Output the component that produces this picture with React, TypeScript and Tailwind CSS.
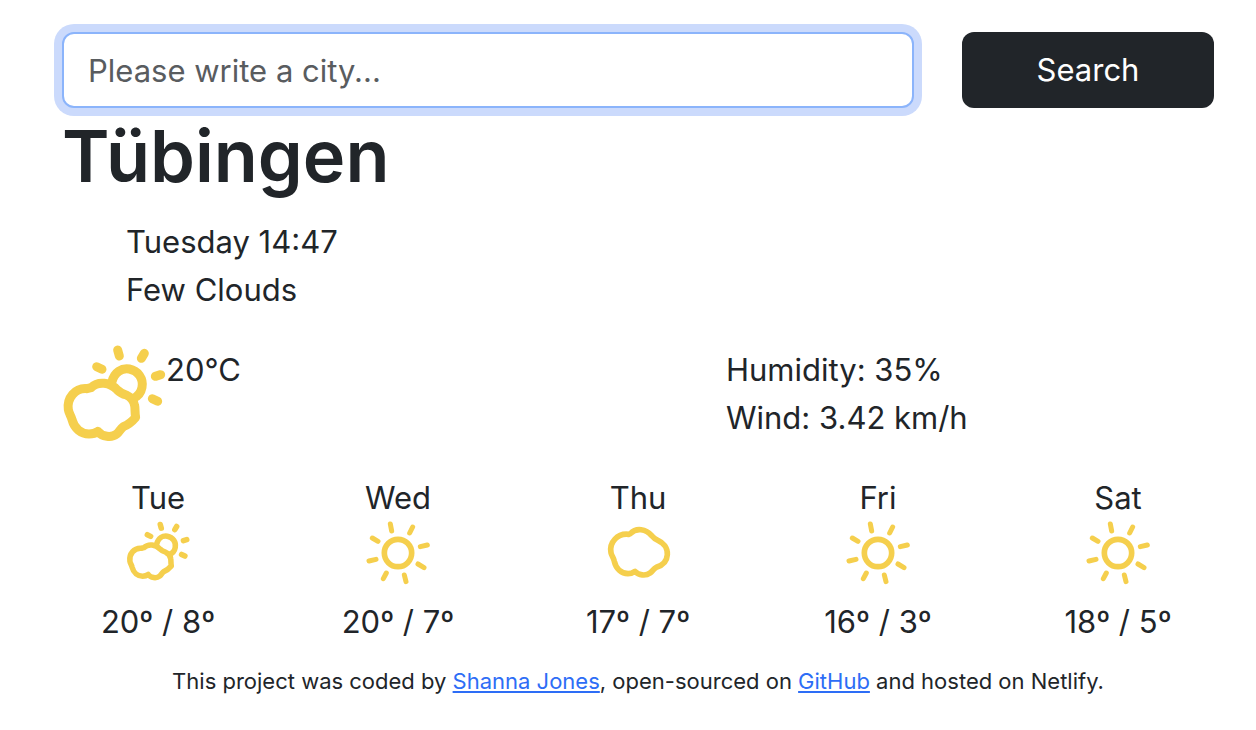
import React from "react";

type IconName = "partly" | "sun" | "cloud";

function WeatherIcon({ name, className }: { name: IconName; className: string }) {
  const common = {
    className: `overflow-visible ${className}`,
    fill: "none",
    stroke: "#f5cf4d",
    strokeLinecap: "round" as const,
    strokeLinejoin: "round" as const,
    role: "img",
  };
  if (name === "partly") {
    return (
      <svg {...common} viewBox="36 33 312 312" strokeWidth="27" aria-label="Partly cloudy">
        <path d="M111 161C75 158 50 190 55 224C57 237 64 243 66 254C73 281 94 297 117 297C128 297 136 295 144 289C156 306 185 309 200 297C209 290 211 281 220 275C235 269 246 260 257 247C254 235 256 222 254 212C251 194 240 185 229 180C217 177 210 173 202 165C180 142 145 137 123 158Z" />
        <path d="M186 140C193 111 216 98 238 102C264 107 281 131 276 157C273 174 263 185 248 191" />
        <path d="M203 45L208 63M283 55L274 70M140 95L156 103M316 124L332 119M307 191L323 199" />
      </svg>
    );
  }
  if (name === "sun") {
    return (
      <svg {...common} viewBox="48 36 192 192" strokeWidth="17" aria-label="Sunny">
        <circle cx="144" cy="129" r="41" />
        <path
          strokeWidth="15"
          d="M121 42L125 63M188 51L179 69M67 84L84 94M211 110L232 105M57 153L78 148M204 162L222 173M109 189L100 206M163 195L168 215"
        />
      </svg>
    );
  }
  return (
    <svg {...common} viewBox="48 36 192 192" strokeWidth="17" aria-label="Cloudy">
      <path d="M116 73C83 69 57 97 63 128C65 138 71 143 73 154C78 177 95 190 114 191C122 191 129 188 135 184C146 196 167 199 180 189C188 184 190 176 199 172C219 166 231 152 232 134C233 112 219 98 205 92C194 88 190 83 185 77C168 57 139 52 121 71Z" />
    </svg>
  );
}

const forecast: { day: string; icon: IconName; high: number; low: number }[] = [
  { day: "Tue", icon: "partly", high: 20, low: 8 },
  { day: "Wed", icon: "sun", high: 20, low: 7 },
  { day: "Thu", icon: "cloud", high: 17, low: 7 },
  { day: "Fri", icon: "sun", high: 16, low: 3 },
  { day: "Sat", icon: "sun", high: 18, low: 5 },
];

export default function App() {
  return (
    <main className="bg-white pt-8 pr-[18px] pb-8 pl-[38px] font-['Inter',sans-serif] text-[31px] leading-[48px] text-[#212529]">
      <form className="grid grid-cols-12" onSubmit={(e) => e.preventDefault()}>
        <div className="col-span-9 px-6">
          <input
            type="search"
            aria-label="City"
            placeholder="Please write a city..."
            className="block h-[76px] w-full appearance-none rounded-xl border-2 border-[#8bb4fb] bg-white px-6 shadow-[0_0_0_8px_#cbdafc] outline-none placeholder:text-[#595c5f]"
          />
        </div>
        <div className="col-span-3 px-6">
          <button type="submit" className="block h-[76px] w-full rounded-xl bg-[#212529] text-white">
            Search
          </button>
        </div>
      </form>

      <h1 className="px-6 pb-3.5 text-[72px] leading-[96px] font-semibold">Tübingen</h1>
      <ul className="mb-8 pr-6 pl-[88px]">
        <li>Tuesday 14:47</li>
        <li>Few Clouds</li>
      </ul>

      <div className="mb-8 grid grid-cols-2">
        <div className="flex px-6">
          <WeatherIcon name="partly" className="-mb-2 size-[104px] shrink-0" />
          <span>20°C</span>
        </div>
        <ul className="pr-6 pl-[88px]">
          <li>Humidity: 35%</li>
          <li>Wind: 3.42 km/h</li>
        </ul>
      </div>

      <div className="grid grid-cols-5 text-center">
        {forecast.map((item) => (
          <div key={item.day}>
            <div>{item.day}</div>
            <WeatherIcon name={item.icon} className="mx-auto mb-3 block size-16" />
            <div>
              {item.high}º / {item.low}º
            </div>
          </div>
        ))}
      </div>

      <footer className="px-6 pt-5 text-center text-[22px] leading-[30px]">
        This project was coded by{" "}
        <a href="#author" className="text-[#2d6df6] underline">
          Shanna Jones
        </a>
        , open-sourced on{" "}
        <a href="#github" className="text-[#2d6df6] underline">
          GitHub
        </a>{" "}
        and hosted on Netlify.
      </footer>
    </main>
  );
}
